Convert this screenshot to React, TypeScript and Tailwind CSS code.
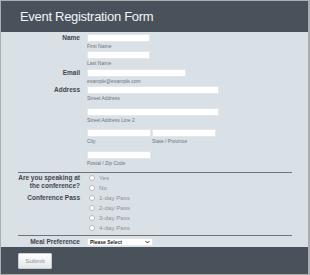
import React from 'react';

const Sub = ({ children }: { children: React.ReactNode }) => (
  <div className="text-[5px] text-[#6f757b] leading-[6px] mt-[1px] whitespace-nowrap">{children}</div>
);

const Field = ({ w }: { w: string }) => <div className={`h-[8px] bg-white border border-[#e3e7ea] ${w}`} />;

const Label = ({ children, className = '' }: { children: React.ReactNode; className?: string }) => (
  <div className={`text-right text-[6.5px] font-bold text-[#41464c] leading-[8px] ${className}`}>{children}</div>
);

const Radio = ({ label }: { label: string }) => (
  <div className="flex items-center gap-[4px] h-[10px]">
    <span className="w-[6px] h-[6px] rounded-full bg-white border border-[#b7bcc1]" />
    <span className="text-[6.2px] text-[#8e949a]">{label}</span>
  </div>
);

export default function App() {
  return (
    <div
      className="w-[310px] h-[275px] flex flex-col bg-[#d9e0e6] border border-[#a9aeb3] border-r-2 overflow-hidden"
      style={{ fontFamily: '"Liberation Sans", Arial, sans-serif' }}
    >
      <div className="h-[31px] shrink-0 bg-[#49525a] flex items-center pl-[19px]">
        <h1 className="text-[13px] tracking-[-0.3px] text-[#f2f4f5]">Event Registration Form</h1>
      </div>

      <div className="flex-1 pl-[17px] pr-[16px]">
        <div className="grid grid-cols-[62px_1fr] gap-x-[7px] pt-[2px]">
          <Label>Name</Label>
          <div>
            <Field w="w-[63px]" />
            <Sub>First Name</Sub>
            <div className="mt-[2px]"><Field w="w-[63px]" /></div>
            <Sub>Last Name</Sub>
          </div>

          <Label className="mt-[3px]">Email</Label>
          <div className="mt-[3px]">
            <Field w="w-[99px]" />
            <Sub>example@example.com</Sub>
          </div>

          <Label className="mt-[2px]">Address</Label>
          <div className="mt-[2px]">
            <Field w="w-[132px]" />
            <Sub>Street Address</Sub>
            <div className="mt-[7px]"><Field w="w-[132px]" /></div>
            <Sub>Street Address Line 2</Sub>
            <div className="mt-[6px] flex gap-[1px]">
              <div>
                <Field w="w-[64px]" />
                <Sub>City</Sub>
              </div>
              <div>
                <Field w="w-[64px]" />
                <Sub>State / Province</Sub>
              </div>
            </div>
            <div className="mt-[7px]"><Field w="w-[64px]" /></div>
            <Sub>Postal / Zip Code</Sub>
          </div>
        </div>

        <div className="h-px bg-[#6d7479] mt-[6px]" />

        <div className="grid grid-cols-[62px_1fr] gap-x-[9px]">
          <Label className="leading-[7px] pt-[1px]">
            Are you speaking at
            <br />
            the conference?
          </Label>
          <div>
            <Radio label="Yes" />
            <Radio label="No" />
          </div>
          <Label className="pt-[1px]">Conference Pass</Label>
          <div>
            <Radio label="1-day Pass" />
            <Radio label="2-day Pass" />
            <Radio label="3-day Pass" />
            <Radio label="4-day Pass" />
          </div>
        </div>

        <div className="h-px bg-[#6d7479] mt-[2px]" />

        <div className="grid grid-cols-[62px_1fr] gap-x-[7px] mt-[2px]">
          <Label>Meal Preference</Label>
          <div className="w-[66px] h-[8px] bg-white border border-[#e3e7ea] flex items-center justify-between pl-[2px] pr-[2px]">
            <span className="text-[5px] text-[#222] font-bold leading-[6px]">Please Select</span>
            <svg width="5" height="4" viewBox="0 0 10 8"><path d="M1 2 L5 6 L9 2" fill="none" stroke="#333" strokeWidth="2" /></svg>
          </div>
        </div>
      </div>

      <div className="h-[27px] shrink-0 bg-[#49525a] flex items-center pl-[17px]">
        <button className="w-[34px] h-[16px] bg-gradient-to-b from-white to-[#e4e6e8] border border-[#c9cdd0] rounded-[1px] text-[6.2px] text-[#8a9096]">
          Submit
        </button>
      </div>
    </div>
  );
}
